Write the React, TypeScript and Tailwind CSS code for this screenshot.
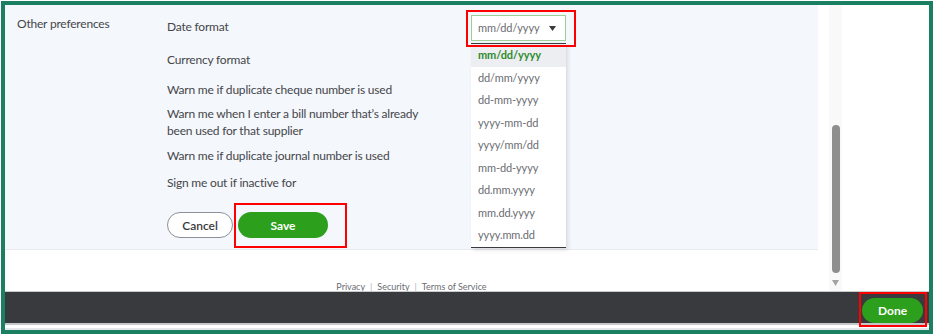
const formats = [
  'mm/dd/yyyy',
  'dd/mm/yyyy',
  'dd-mm-yyyy',
  'yyyy-mm-dd',
  'yyyy/mm/dd',
  'mm-dd-yyyy',
  'dd.mm.yyyy',
  'mm.dd.yyyy',
  'yyyy.mm.dd',
];

const font = { fontFamily: 'Lato, "Open Sans", sans-serif' };

const Highlight = ({ className }: { className: string }) => (
  <div className={`absolute border-2 border-[#ff0000] pointer-events-none ${className}`} />
);

const DateDropdown = () => (
  <div className="absolute left-[466px] top-[10px] w-[95px]">
    <div className="h-[26px] border border-[#9fcf99] bg-white flex items-center justify-between pl-[6px] pr-[9px]">
      <span className="text-[11px] tracking-[-0.1px] text-[#6b6c72]">mm/dd/yyyy</span>
      <svg width="7" height="5" viewBox="0 0 7 5">
        <path d="M0 0 L7 0 L3.5 5 Z" fill="#393a3d" />
      </svg>
    </div>
    <div className="h-[2px]" />
    <div className="border-t border-b border-[#393a3d] bg-white shadow-[2px_2px_4px_rgba(0,0,0,0.12)]">
      {formats.map((f, i) => (
        <div
          key={f}
          className={`h-[22.5px] flex items-center pl-[7px] text-[11px] tracking-[-0.1px] ${
            i === 0 ? 'bg-[#eceef1] text-[#2e8b2e] font-bold' : 'text-[#6b6c72]'
          }`}
        >
          {f}
        </div>
      ))}
    </div>
  </div>
);

const PreferencesPanel = () => (
  <div className="relative h-[244px] w-[813px] bg-[#f4f7fc] flex text-[12px] tracking-[-0.2px] text-[#45464a]">
    <div className="w-[162px] pl-[12px] pt-[10px] leading-[17px]">Other preferences</div>
    <div className="flex flex-col pt-[13px] leading-[17px]">
      <div>Date format</div>
      <div className="mt-[16px]">Currency format</div>
      <div className="mt-[13px]">Warn me if duplicate cheque number is used</div>
      <div className="mt-[7px]">
        Warn me when I enter a bill number that’s already
        <br />
        been used for that supplier
      </div>
      <div className="mt-[8px]">Warn me if duplicate journal number is used</div>
      <div className="mt-[10px]">Sign me out if inactive for</div>
      <div className="mt-[21px] flex gap-[5px] tracking-normal">
        <button className="h-[26px] w-[66px] rounded-full border border-[#8d9096] bg-white text-[12px] font-semibold text-[#393a3d]">
          Cancel
        </button>
        <button className="h-[26px] w-[90px] rounded-full bg-[#2ca01c] text-[12px] font-bold text-white">
          Save
        </button>
      </div>
    </div>
    <DateDropdown />
  </div>
);

const Scrollbar = () => (
  <div className="w-[13px] h-full bg-[#f9f9f9] relative">
    <div className="absolute left-[3px] top-[120px] w-[8px] h-[148px] rounded-full bg-[#8e8e8e]" />
    <svg className="absolute left-[3px] top-[275px]" width="7" height="6" viewBox="0 0 7 6">
      <path d="M0 0 L7 0 L3.5 6 Z" fill="#a3a3a3" />
    </svg>
  </div>
);

export default function App() {
  return (
    <div className="w-[935px] h-[336px] bg-white pt-px pl-px relative" style={font}>
      <div className="w-[932px] h-[333px] border-4 border-[#1b8062] flex flex-col">
        <div className="h-[286px] flex">
          <div className="w-[824px] flex flex-col">
            <PreferencesPanel />
            <div className="w-[813px] h-px bg-[#e8eaee]" />
            <div className="w-[813px] flex-1 flex items-end justify-center">
              <div className="text-[9px] text-[#6b6c72] flex gap-[5px] leading-[9px]">
                <span>Privacy</span>
                <span className="text-[#b0b2b6]">|</span>
                <span>Security</span>
                <span className="text-[#b0b2b6]">|</span>
                <span>Terms of Service</span>
              </div>
            </div>
          </div>
          <Scrollbar />
          <div className="flex-1 bg-white" />
        </div>
        <div className="h-px bg-[#c9cacc]" />
        <div className="h-[31px] bg-[#393a3e] flex justify-end items-start pt-[6px] pr-[6px]">
          <button className="h-[25px] w-[61px] rounded-full bg-[#2ca01c] text-[12px] font-bold text-white">
            Done
          </button>
        </div>
        <div className="h-[2px] bg-[#c4c6c9]" />
        <div className="h-[3px] bg-white" />
        <div className="flex-1 bg-[#e3e6ea]" />
      </div>
      <Highlight className="left-[466px] top-[10px] w-[110px] h-[37px]" />
      <Highlight className="left-[234px] top-[203px] w-[113px] h-[45px]" />
      <Highlight className="left-[859px] top-[292px] w-[68px] h-[35px]" />
    </div>
  );
}
